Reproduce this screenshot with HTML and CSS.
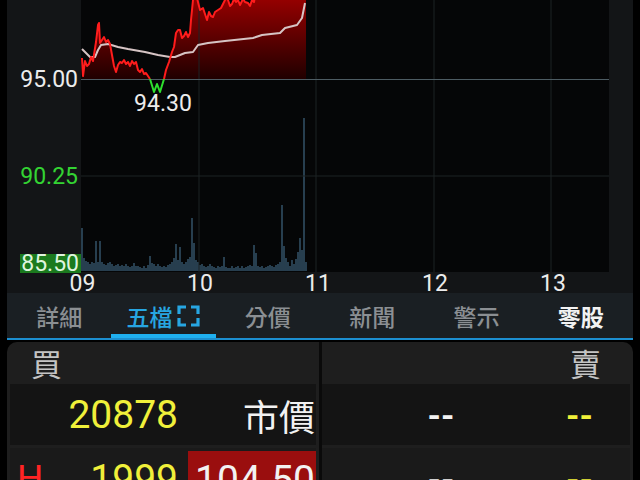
FILE: index.html
```html
<!DOCTYPE html>
<html lang="zh-Hant">
<head>
<meta charset="utf-8">
<title>五檔</title>
<link rel="stylesheet" href="styles.css">
</head>
<body>
<div class="app">
  <svg class="chart" width="626" height="293" viewBox="7 0 626 293">
    <defs>
      <linearGradient id="redfill" x1="0" y1="0" x2="0" y2="79" gradientUnits="userSpaceOnUse">
        <stop offset="0" stop-color="#940000"/>
        <stop offset="1" stop-color="#200000"/>
      </linearGradient>
    </defs>
    <rect class="axis-bg" x="7" y="0" width="626" height="293"/>
    <rect class="plot-bg" x="81" y="0" width="528" height="272"/>

    <path class="vol" d="M82 271V228M84 271V258M86 271V261M88 271V262M90 271V264M92 271V262M94 271V263M96 271V241M98 271V262M100 271V241M102 271V262M104 271V264M106 271V265M108 271V263M110 271V262M112 271V264M114 271V266M116 271V265M118 271V264M120 271V266M122 271V265M124 271V266M126 271V264M128 271V266M130 271V267M132 271V266M134 271V263M136 271V266M138 271V266M140 271V267M142 271V268M144 271V266M146 271V268M148 271V265M150 271V256M152 271V263M154 271V264M156 271V266M158 271V264M160 271V266M162 271V267M164 271V266M166 271V267M168 271V265M170 271V264M172 271V262M174 271V258M176 271V244M178 271V260M180 271V247M182 271V262M184 271V264M186 271V262M188 271V259M190 271V257M192 271V218M194 271V243M196 271V260M198 271V262M200 271V265M202 271V264M204 271V266M206 271V267M208 271V266M210 271V264M212 271V266M214 271V267M216 271V268M218 271V266M220 271V267M222 271V266M224 271V257M226 271V267M228 271V268M230 271V268M232 271V266M234 271V268M236 271V267M238 271V266M240 271V268M242 271V266M244 271V268M246 271V267M248 271V266M250 271V265M252 271V266M254 271V245M256 271V253M258 271V266M260 271V267M262 271V266M264 271V268M266 271V267M268 271V266M270 271V265M272 271V266M274 271V267M276 271V265M278 271V264M280 271V262M282 271V205M284 271V246M286 271V258M288 271V262M290 271V266M292 271V260M294 271V264M296 271V259M298 271V252M300 271V238M302 271V250M304 271V118M306 271V262"/>

    <polygon class="area" points="82,79 82,58 83,76 85,61 87,66 89,64 91,57 93,61 96,42 98,25 99,23 100,43 102,40 104,37 106,42 108,40 110,44 112,55 114,66 116,72 118,65 120,62 122,63 124,60 126,64 128,62 130,66 132,61 134,64 136,62 138,70 140,72 142,69 144,74 146,73 148,76 150,79"/>
    <polygon class="area" points="164,79 166,70 169,62 172,52 174,47 175,40 176,33 178,30 180,30 182,38 184,36 186,32 188,37 190,33 191,20 193,0 195,-5 197,-2 200,10 203,8 205,14 207,20 209,12 211,16 213,17 215,12 218,10 221,8 223,4 226,-2 228,0 230,6 232,4 234,-1 236,2 238,0 240,5 243,-1 245,2 248,3 250,6 252,0 254,2 256,-10 306,-10 306,79"/>

    <line class="grid" x1="199" y1="0" x2="199" y2="272"/>
    <line class="grid" x1="316" y1="0" x2="316" y2="272"/>
    <line class="grid" x1="434" y1="0" x2="434" y2="272"/>
    <line class="grid" x1="551" y1="0" x2="551" y2="272"/>
    <line class="grid" x1="81" y1="176" x2="609" y2="176"/>
    <line class="grid-base" x1="81" y1="79.5" x2="609" y2="79.5"/>

    <polyline class="avg" points="82,49 86,53 90,57 95,57 98,50 101,45 108,44 118,47 128,49 145,52 158,55 170,57 175,57 185,53 193,52 198,45 208,43 225,41 253,38 262,35 280,33 285,28 297,25 302,18 305,3"/>
    <polyline class="up" points="82,58 83,76 85,61 87,66 89,64 91,57 93,61 96,42 98,25 99,23 100,43 102,40 104,37 106,42 108,40 110,44 112,55 114,66 116,72 118,65 120,62 122,63 124,60 126,64 128,62 130,66 132,61 134,64 136,62 138,70 140,72 142,69 144,74 146,73 148,76 150,79"/>
    <polyline class="down" points="150,79 154,92 157,84 160,92 164,79"/>
    <polyline class="up" points="164,79 166,70 169,62 172,52 174,47 175,40 176,33 178,30 180,30 182,38 184,36 186,32 188,37 190,33 191,20 193,0 195,-5 197,-2 200,10 203,8 205,14 207,20 209,12 211,16 213,17 215,12 218,10 221,8 223,4 226,-2 228,0 230,6 232,4 234,-1 236,2 238,0 240,5 243,-1 245,2 248,3 250,6 252,0 254,2 256,-10"/>

    <text class="lab" x="78" y="87" text-anchor="end">95.00</text>
    <text class="lab" x="163" y="111" text-anchor="middle">94.30</text>
    <text class="lab green" x="78" y="184" text-anchor="end">90.25</text>
    <rect class="last-bg" x="20" y="254" width="61" height="19"/>
    <text class="lab last" x="79" y="271" text-anchor="end">85.50</text>

    <text class="lab" x="82.5" y="291" text-anchor="middle">09</text>
    <text class="lab" x="200" y="291" text-anchor="middle">10</text>
    <text class="lab" x="318" y="291" text-anchor="middle">11</text>
    <text class="lab" x="435" y="291" text-anchor="middle">12</text>
    <text class="lab" x="553" y="291" text-anchor="middle">13</text>
  </svg>

  <nav class="tabs">
    <div class="tab">詳細</div>
    <div class="tab active">五檔<svg class="expand" width="23" height="22" viewBox="0 0 23 22"><path d="M2 9V2H9M14 2H21V9M21 13V20H14M9 20H2V13"/></svg></div>
    <div class="tab">分價</div>
    <div class="tab">新聞</div>
    <div class="tab">警示</div>
    <div class="tab bold">零股</div>
  </nav>

  <section class="book">
    <div class="half buy">
      <div class="head">買</div>
      <div class="row dark">
        <span class="tag"></span>
        <span class="vol-cell">20878</span>
        <span class="price-cell cjk">市價</span>
      </div>
      <div class="row">
        <span class="tag">H</span>
        <span class="vol-cell">1999</span>
        <span class="price-cell hot">104.50</span>
      </div>
    </div>
    <div class="divider"></div>
    <div class="half sell">
      <div class="head right">賣</div>
      <div class="row dark">
        <span class="price-cell dash">--</span>
        <span class="vol-cell dash">--</span>
      </div>
      <div class="row">
        <span class="price-cell dash">--</span>
        <span class="vol-cell dash">--</span>
      </div>
    </div>
  </section>
</div>
</body>
</html>
```

FILE: styles.css
```css
html, body {
  margin: 0;
  padding: 0;
  background: #000;
  width: 640px;
  height: 480px;
  overflow: hidden;
}

.app {
  width: 626px;
  margin: 0 7px;
  font-family: Roboto, "Noto Sans CJK TC", sans-serif;
}

.chart {
  display: block;
  overflow: visible;
}

.axis-bg { fill: #131517; }
.plot-bg { fill: #050607; }

.grid {
  stroke: #1c2225;
  stroke-width: 1;
}
.grid-base {
  stroke: #4d5c63;
  stroke-width: 1;
}

.vol {
  stroke: #37586e;
  stroke-width: 1.4;
  fill: none;
}

.area { fill: url(#redfill); }

.avg {
  fill: none;
  stroke: #d6c4c4;
  stroke-width: 2;
  stroke-linejoin: round;
}
.up {
  fill: none;
  stroke: #ff1c1c;
  stroke-width: 2;
  stroke-linejoin: round;
}
.down {
  fill: none;
  stroke: #2ee02e;
  stroke-width: 2;
  stroke-linejoin: round;
}

.lab {
  font-family: Roboto, sans-serif;
  font-size: 23px;
  fill: #ececec;
}
.lab.green { fill: #33d433; }
.last-bg { fill: #1b7a1e; }
.lab.last { fill: #dff5df; }

/* tabs */
.tabs {
  position: relative;
  display: flex;
  height: 45px;
  background: #1a1f23;
  border-bottom: 2px solid #1c8fd0;
  font-family: "Noto Sans CJK TC", sans-serif;
}
.tab {
  flex: 1;
  position: relative;
  display: flex;
  align-items: center;
  justify-content: center;
  gap: 5px;
  font-size: 23px;
  font-weight: 500;
  color: #8b8f93;
  padding-top: 1px;
}
.tab.active {
  color: #27a6e2;
}
.tab.active::after {
  content: "";
  position: absolute;
  left: 0;
  right: 0;
  bottom: 0;
  height: 4px;
  background: #1fb0f0;
}
.tab.bold {
  color: #f2f2f2;
  font-weight: 700;
}
.expand path {
  fill: none;
  stroke: #27a6e2;
  stroke-width: 3.2;
}

/* order book */
.book {
  display: flex;
  margin-top: 2px;
  height: 140px;
  background: #1e1e1e;
  border-radius: 10px 10px 0 0;
}
.half {
  display: flex;
  flex-direction: column;
}
.buy {
  width: 312px;
}
.sell {
  flex: 1;
}
.divider {
  width: 3px;
  background: #0a0a0a;
}
.head {
  flex: none;
  height: 42px;
  font-family: "Noto Sans CJK TC", sans-serif;
  font-size: 31px;
  line-height: 42px;
  color: #c4c4c4;
  padding-left: 24px;
}
.head.right {
  text-align: right;
  padding-left: 0;
  padding-right: 32px;
}

.row {
  flex: none;
  display: grid;
  height: 61px;
  align-items: center;
  font-size: 39px;
  background: #1a1a1a;
  margin-bottom: 3px;
}
.row.dark {
  background: #141414;
}
.buy .row {
  grid-template-columns: 50px 118px 138px;
  margin-left: 3px;
  margin-right: 3px;
}
.sell .row {
  grid-template-columns: 238px 1fr;
  margin-right: 3px;
}

.tag {
  color: #ff2424;
  font-size: 37px;
  padding-left: 7px;
}
.vol-cell {
  color: #f0f03a;
  text-align: right;
}
.sell .vol-cell {
  text-align: left;
  padding-left: 6px;
}
.price-cell {
  color: #f2f2f2;
  text-align: right;
  margin-left: 10px;
}
.sell .price-cell {
  text-align: center;
  margin-left: 0;
}
.dash {
  font-weight: 700;
  font-size: 34px;
}
.price-cell.cjk {
  font-family: "Noto Sans CJK TC", sans-serif;
  font-size: 36px;
  padding-right: 1px;
}
.price-cell.hot {
  align-self: stretch;
  margin-top: 3px;
  background: #9a0e0e;
  display: flex;
  align-items: center;
  justify-content: flex-end;
  padding-right: 1px;
}
```
